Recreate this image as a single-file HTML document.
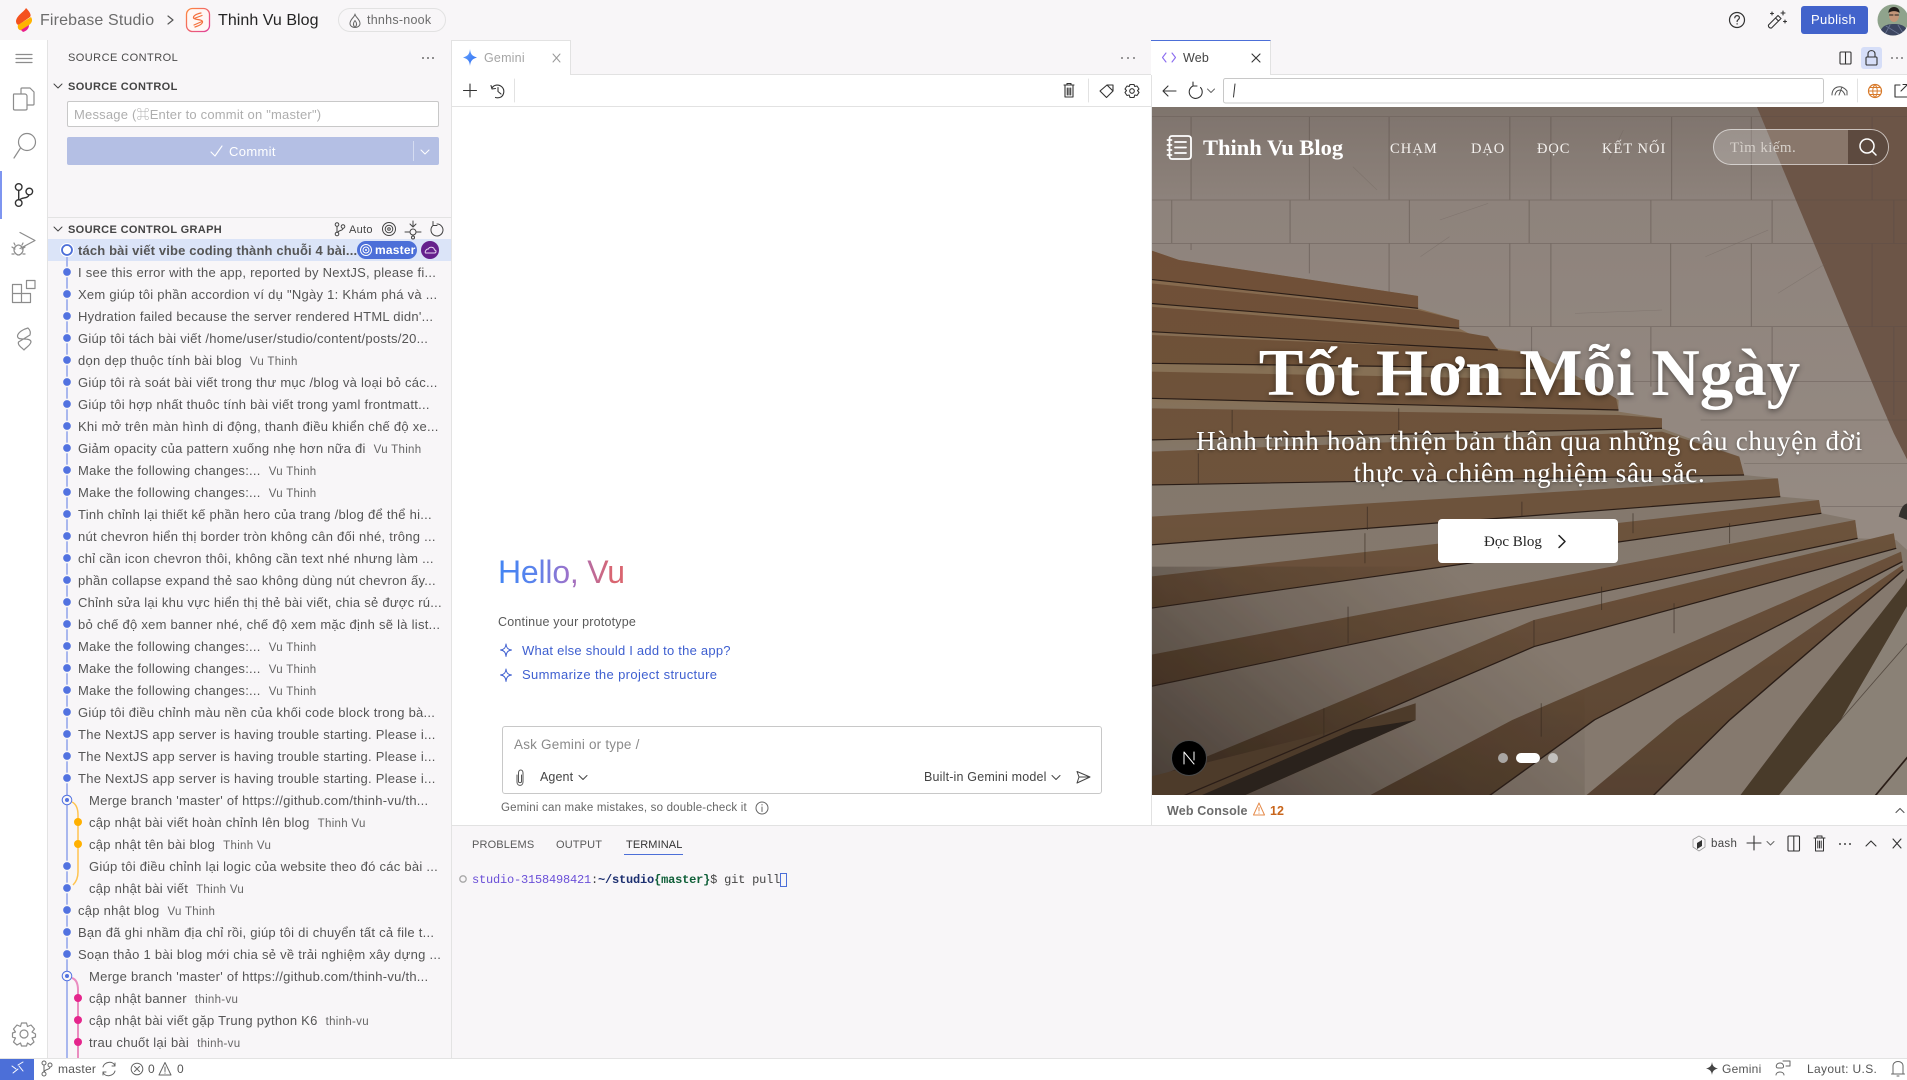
<!DOCTYPE html>
<html lang="vi"><head><meta charset="utf-8"><title>Firebase Studio</title>
<style>
html,body{margin:0;padding:0;width:1907px;height:1080px;overflow:hidden;background:#f8f6f8;font-family:"Liberation Sans","Noto Sans CJK JP",sans-serif;color:#444}
.a{position:absolute;white-space:nowrap}
.box{position:absolute}
.s{font-family:"Liberation Serif","Noto Serif CJK SC",serif}
.r{position:absolute;left:0;margin-top:1px;height:22px;line-height:22px;font-size:13px;letter-spacing:.26px;color:#555;white-space:nowrap}
.r i{font-style:normal;font-size:11.5px;letter-spacing:.3px;color:#666;margin-left:8px}
svg{position:absolute;overflow:visible}
</style></head><body>

<!-- panels -->
<div class="box" style="left:0;top:40px;width:47px;height:1018px;background:#fff;border-right:1px solid #e3e3e3"></div>
<div class="box" style="left:451px;top:40px;width:1px;height:1018px;background:#e3e3e3"></div>
<div class="box" style="left:48px;top:217px;width:403px;height:1px;background:#e3e3e3"></div>
<div class="box" style="left:48px;top:239px;width:403px;height:22px;background:#dbe4f8"></div>
<div class="box" style="left:452px;top:74px;width:1455px;height:751px;background:#fff"></div>
<div class="box" style="left:452px;top:74px;width:1455px;height:1px;background:#e2e2e2"></div>
<div class="box" style="left:452px;top:106px;width:699px;height:1px;background:#e2e2e2"></div>
<div class="box" style="left:1151px;top:40px;width:1px;height:785px;background:#e2e2e2"></div>
<div class="box" style="left:452px;top:825px;width:1455px;height:1px;background:#e2e2e2"></div>
<div class="box" style="left:451px;top:40px;width:120px;height:35px;background:#fff;border:1px solid #e2e2e2;border-bottom:0;box-sizing:border-box"></div>
<div class="box" style="left:1151px;top:40px;width:120px;height:35px;background:#fff;border-right:1px solid #e2e2e2;border-top:1px solid #4c6fd8;box-sizing:border-box"></div>
<div class="box" style="left:0;top:1058px;width:1907px;height:22px;background:#fff;border-top:1px solid #e3e3e3;box-sizing:border-box"></div>
<div class="box" style="left:0;top:1059px;width:34px;height:21px;background:#4c6fd8"></div>

<!-- hero image -->
<svg style="left:1152px;top:107px;overflow:hidden" width="755" height="688" viewBox="0 0 755 688">
<defs>
<linearGradient id="wall" gradientUnits="userSpaceOnUse" x1="0" y1="-585" x2="0" y2="600"><stop offset="0" stop-color="#7e736c"/><stop offset=".25" stop-color="#8e837c"/><stop offset="1" stop-color="#958a82"/></linearGradient>
<linearGradient id="tread" gradientUnits="userSpaceOnUse" x1="0" y1="-150" x2="0" y2="900"><stop offset="0" stop-color="#86694c"/><stop offset=".4" stop-color="#867056"/><stop offset=".62" stop-color="#83786c"/><stop offset="1" stop-color="#85796e"/></linearGradient>
<linearGradient id="ris" gradientUnits="userSpaceOnUse" x1="0" y1="-150" x2="0" y2="1485"><stop offset="0" stop-color="#6f5037"/><stop offset=".5" stop-color="#6d533c"/><stop offset="1" stop-color="#574230"/></linearGradient>
<linearGradient id="shade" gradientUnits="userSpaceOnUse" x1="0" y1="1490" x2="700" y2="900"><stop offset="0" stop-color="#1d140e" stop-opacity=".6"/><stop offset=".6" stop-color="#1d140e" stop-opacity=".18"/><stop offset="1" stop-color="#1d140e" stop-opacity="0"/></linearGradient>
<filter id="b"><feGaussianBlur stdDeviation=".6"/></filter>
</defs>
<rect width="755" height="688" fill="#847a72"/>
<g transform="translate(-2,193) scale(.483,.3333)" filter="url(#b)">
<rect x="0" y="-585" width="1575" height="2075" fill="url(#wall)"/>
<polygon points="1255,-585 1575,-585 1575,500 1540,400 1510,300" fill="#6c5446"/>
<g stroke="#574c46" stroke-width="2.2" fill="none" opacity=".45">
<path d="M0,-550H1570M0,-300H1570M0,-170H1570M0,80H1570M0,-25H400"/>
<path d="M85,-550V-300M330,-550V-300M495,-550V-300M745,-550V-300M830,-550V-300M1080,-550V-300M1245,-550V-300M1495,-550V-300"/>
<path d="M45,-300V-170M290,-300V-170M537,-300V-170M785,-300V-170M1037,-300V-170M1288,-300V-170M1540,-300V-170"/>
<path d="M85,-170V-150M330,-170V-80M495,-170V20M745,-170V80M830,-170V80M1078,-170V80M1245,-170V80M1495,-170V80"/>
<path d="M790,80V155M1037,80V260M1288,80V330M1540,80V345M1000,245H1570M1140,360H1570M1230,490H1570M1390,620H1568"/>
</g>
<g stroke="#6f645e" stroke-width="1.5" fill="none" opacity=".45"><path d="M620,-190L560,-130M980,-510L950,-420M1150,-130L1280,-210M1300,-20L1400,-110M600,-240L700,-290M420,-400L470,-330M880,40L1060,30"/></g>
<polygon points="0,-150 60,-120 555,-12 555,25 640,60 640,85 720,145 800,160 970,300 970,335 1060,355 1060,385 1220,470 1230,525 1300,535 1305,590 1385,600 1390,640 1460,660 1465,715 1545,720 1575,760 1575,1490 0,1490" fill="url(#tread)"/>
<g fill="url(#ris)">
<polygon points="0,-150 60,-120 555,-12 555,25 0,-62"/>
<polygon points="0,-50 555,30 640,60 640,85 0,10"/>
<polygon points="0,20 640,95 700,110 720,150 0,95"/>
<polygon points="0,105 720,150 800,160 810,205 0,190"/>
<polygon points="0,215 900,240 965,295 970,330 0,295"/>
<polygon points="0,325 970,345 1060,355 1060,385 0,420"/>
<polygon points="0,455 1060,395 1220,470 1230,525 0,555"/>
<polygon points="0,650 1300,535 1305,590 0,735"/>
<polygon points="0,830 1385,600 1390,640 0,925"/>
<polygon points="0,1065 1460,660 1465,715 0,1160"/>
<polygon points="0,1440 360,1225 795,960 1540,700 1545,745 795,1040 360,1310 0,1530"/>
<polygon points="450,1490 750,1260 1555,755 1558,785 920,1260 700,1490"/>
<polygon points="900,1490 1090,1260 1558,795 1560,810 1200,1260 1040,1490"/>
</g>
<polygon points="1220,1490 1340,1260 1562,850 1575,810 1575,900 1430,1260 1300,1490" fill="#4a3a2c"/>
<polygon points="1300,1490 1430,1260 1575,900 1575,1490" fill="#8a8176"/>
<rect x="0" y="800" width="900" height="690" fill="url(#shade)"/>
<polygon points="0,1430 360,1300 550,1210 550,1260 190,1490 0,1490" fill="#4d3a2c"/>
<polygon points="100,1490 420,1290 550,1260 190,1490" fill="#2b211a"/>
<g stroke="#2a1f18" stroke-width="3.5" fill="none">
<path d="M0,-62L555,25M0,10L640,85M0,95L720,150M0,190L810,205M0,295L970,330M0,420L1060,385M0,555L1230,525M0,735L1305,590M0,925L1390,640M0,1160L1465,715M0,1530L360,1310 795,1040 1545,745M700,1490L920,1260 1558,785M1040,1490L1200,1260 1560,810"/>
</g>
<g stroke="#332820" stroke-width="2" fill="none" opacity=".6"><path d="M170,330V400M515,325V395M100,460V550M450,620V690M770,605V650M445,700V790M410,920V1030M795,960V1040M360,1225V1310M810,1210V1310M935,860V930M1085,910V1000M1000,640V700M1200,670V730M1400,1310L1568,1030"/></g>
<path d="M1500,1490L1575,1360" stroke="#2a1f18" stroke-width="4"/>
<path d="M1568,610c-8,3-14,15-18,40l18,10z" fill="#35312e"/>
</g>
</svg>

<!-- top bar text -->
<div class="a" style="left:40px;top:11px;font-size:16px;line-height:20px;letter-spacing:.15px;color:#6c6c6c">Firebase Studio</div>
<div class="a" style="left:218px;top:11px;font-size:16px;line-height:20px;letter-spacing:.05px;color:#242424">Thinh Vu Blog</div>
<div class="box" style="left:338px;top:8px;width:108px;height:24px;border:1px solid #e2e2e2;border-radius:12px;box-sizing:border-box"></div>
<div class="a" style="left:367px;top:12px;font-size:12.5px;line-height:16px;letter-spacing:.25px;color:#6c6c6c">thnhs-nook</div>
<div class="box" style="left:1801px;top:6px;width:67px;height:28px;background:#4263cb;border-radius:3px"></div>
<div class="a" style="left:1811px;top:12px;font-size:13px;line-height:16px;letter-spacing:.35px;color:#fff">Publish</div>

<!-- sidebar text -->
<div class="a" style="left:68px;top:50px;font-size:11px;line-height:16px;letter-spacing:.45px;color:#4a4a4a">SOURCE CONTROL</div>
<div class="a" style="left:68px;top:79px;font-size:11px;line-height:16px;font-weight:bold;letter-spacing:.37px;color:#444">SOURCE CONTROL</div>
<div class="box" style="left:67px;top:101px;width:372px;height:26px;background:#fff;border:1px solid #c8c8c8;border-radius:2px;box-sizing:border-box"></div>
<div class="a" style="left:74px;top:107px;font-size:13px;line-height:16px;letter-spacing:.2px;color:#aeaeae">Message (⌘Enter to commit on "master")</div>
<div class="box" style="left:67px;top:137px;width:372px;height:28px;background:#b4bfe4;border-radius:2px"></div>
<div class="box" style="left:413px;top:141px;width:1px;height:20px;background:#d5dcf1"></div>
<div class="a" style="left:229px;top:144px;font-size:13px;line-height:16px;letter-spacing:.35px;color:#fff">Commit</div>
<div class="a" style="left:68px;top:222px;font-size:11px;line-height:16px;font-weight:bold;letter-spacing:.35px;color:#444">SOURCE CONTROL GRAPH</div>
<div class="a" style="left:349px;top:222px;font-size:11px;line-height:16px;letter-spacing:.3px;color:#444">Auto</div>

<!-- graph -->
<div class="box" style="left:48px;top:239px;width:403px;height:819px;overflow:hidden">
<svg style="left:0;top:0" width="403" height="819" viewBox="48 239 403 819">
<line x1="67" y1="250" x2="67" y2="1058" stroke="#a9b7ee" stroke-width="2"/>
<path d="M72,802Q78,805 78,815V872Q78,880 73,885" fill="none" stroke="#ffc451" stroke-width="1.5"/>
<path d="M72,978Q78,980 78,990V1058" fill="none" stroke="#ea8cc0" stroke-width="2"/>
<g fill="#5272e0" stroke="#f8f6f8" stroke-width="1.5">
<circle cx="67" cy="272" r="4.6"/><circle cx="67" cy="294" r="4.6"/><circle cx="67" cy="316" r="4.6"/><circle cx="67" cy="338" r="4.6"/><circle cx="67" cy="360" r="4.6"/><circle cx="67" cy="382" r="4.6"/><circle cx="67" cy="404" r="4.6"/><circle cx="67" cy="426" r="4.6"/><circle cx="67" cy="448" r="4.6"/><circle cx="67" cy="470" r="4.6"/><circle cx="67" cy="492" r="4.6"/><circle cx="67" cy="514" r="4.6"/><circle cx="67" cy="536" r="4.6"/><circle cx="67" cy="558" r="4.6"/><circle cx="67" cy="580" r="4.6"/><circle cx="67" cy="602" r="4.6"/><circle cx="67" cy="624" r="4.6"/><circle cx="67" cy="646" r="4.6"/><circle cx="67" cy="668" r="4.6"/><circle cx="67" cy="690" r="4.6"/><circle cx="67" cy="712" r="4.6"/><circle cx="67" cy="734" r="4.6"/><circle cx="67" cy="756" r="4.6"/><circle cx="67" cy="778" r="4.6"/>
<circle cx="67" cy="866" r="4.6"/><circle cx="67" cy="888" r="4.6"/><circle cx="67" cy="910" r="4.6"/><circle cx="67" cy="932" r="4.6"/><circle cx="67" cy="954" r="4.6"/>
</g>
<circle cx="67" cy="250" r="6" fill="#fff" stroke="#fff" stroke-width="2"/><circle cx="67" cy="250" r="5" fill="#fff" stroke="#4c6fd8" stroke-width="1.8"/>
<g fill="#f8f6f8" stroke="#5272e0" stroke-width="1"><circle cx="67" cy="800" r="4.8"/><circle cx="67" cy="976" r="4.8"/></g>
<circle cx="67" cy="800" r="2" fill="#5272e0"/><circle cx="67" cy="976" r="2" fill="#5272e0"/>
<g fill="#ffb000"><circle cx="78" cy="822" r="4"/><circle cx="78" cy="844" r="4"/></g>
<g fill="#e5258c"><circle cx="78" cy="998" r="4"/><circle cx="78" cy="1020" r="4"/><circle cx="78" cy="1042" r="4"/></g>
</svg>
<div class="r" style="left:30px;top:0;font-weight:bold;letter-spacing:.15px">tách bài viết vibe coding thành chuỗi 4 bài...</div>
<div class="r" style="left:30px;top:22px">I see this error with the app, reported by NextJS, please fi...</div>
<div class="r" style="left:30px;top:44px">Xem giúp tôi phần accordion ví dụ "Ngày 1: Khám phá và ...</div>
<div class="r" style="left:30px;top:66px">Hydration failed because the server rendered HTML didn'...</div>
<div class="r" style="left:30px;top:88px">Giúp tôi tách bài viết /home/user/studio/content/posts/20...</div>
<div class="r" style="left:30px;top:110px">dọn dẹp thuộc tính bài blog<i>Vu Thinh</i></div>
<div class="r" style="left:30px;top:132px">Giúp tôi rà soát bài viết trong thư mục /blog và loại bỏ các...</div>
<div class="r" style="left:30px;top:154px">Giúp tôi hợp nhất thuôc tính bài viết trong yaml frontmatt...</div>
<div class="r" style="left:30px;top:176px">Khi mở trên màn hình di động, thanh điều khiển chế độ xe...</div>
<div class="r" style="left:30px;top:198px">Giảm opacity của pattern xuống nhẹ hơn nữa đi<i>Vu Thinh</i></div>
<div class="r" style="left:30px;top:220px">Make the following changes:...<i>Vu Thinh</i></div>
<div class="r" style="left:30px;top:242px">Make the following changes:...<i>Vu Thinh</i></div>
<div class="r" style="left:30px;top:264px">Tinh chỉnh lại thiết kế phần hero của trang /blog để thể hi...</div>
<div class="r" style="left:30px;top:286px">nút chevron hiển thị border tròn không cân đối nhé, trông ...</div>
<div class="r" style="left:30px;top:308px">chỉ cần icon chevron thôi, không cần text nhé nhưng làm ...</div>
<div class="r" style="left:30px;top:330px">phần collapse expand thẻ sao không dùng nút chevron ấy...</div>
<div class="r" style="left:30px;top:352px">Chỉnh sửa lại khu vực hiển thị thẻ bài viết, chia sẻ được rú...</div>
<div class="r" style="left:30px;top:374px">bỏ chế độ xem banner nhé, chế độ xem mặc định sẽ là list...</div>
<div class="r" style="left:30px;top:396px">Make the following changes:...<i>Vu Thinh</i></div>
<div class="r" style="left:30px;top:418px">Make the following changes:...<i>Vu Thinh</i></div>
<div class="r" style="left:30px;top:440px">Make the following changes:...<i>Vu Thinh</i></div>
<div class="r" style="left:30px;top:462px">Giúp tôi điều chỉnh màu nền của khối code block trong bà...</div>
<div class="r" style="left:30px;top:484px">The NextJS app server is having trouble starting. Please i...</div>
<div class="r" style="left:30px;top:506px">The NextJS app server is having trouble starting. Please i...</div>
<div class="r" style="left:30px;top:528px">The NextJS app server is having trouble starting. Please i...</div>
<div class="r" style="left:41px;top:550px">Merge branch 'master' of https://github.com/thinh-vu/th...</div>
<div class="r" style="left:41px;top:572px">cập nhật bài viết hoàn chỉnh lên blog<i>Thinh Vu</i></div>
<div class="r" style="left:41px;top:594px">cập nhật tên bài blog<i>Thinh Vu</i></div>
<div class="r" style="left:41px;top:616px">Giúp tôi điều chỉnh lại logic của website theo đó các bài ...</div>
<div class="r" style="left:41px;top:638px">cập nhật bài viết<i>Thinh Vu</i></div>
<div class="r" style="left:30px;top:660px">cập nhật blog<i>Vu Thinh</i></div>
<div class="r" style="left:30px;top:682px">Bạn đã ghi nhầm địa chỉ rồi, giúp tôi di chuyển tất cả file t...</div>
<div class="r" style="left:30px;top:704px">Soạn thảo 1 bài blog mới chia sẻ về trải nghiệm xây dựng ...</div>
<div class="r" style="left:41px;top:726px">Merge branch 'master' of https://github.com/thinh-vu/th...</div>
<div class="r" style="left:41px;top:748px">cập nhật banner<i>thinh-vu</i></div>
<div class="r" style="left:41px;top:770px">cập nhật bài viết gặp Trung python K6<i>thinh-vu</i></div>
<div class="r" style="left:41px;top:792px">trau chuốt lại bài<i>thinh-vu</i></div>
</div>
<div class="box" style="left:357px;top:241px;width:60px;height:18px;background:#4c6fd8;border-radius:9px"></div>
<div class="a" style="left:375px;top:242px;font-size:12px;line-height:16px;font-weight:bold;letter-spacing:.2px;color:#fff">master</div>
<div class="box" style="left:421px;top:241px;width:18px;height:18px;background:#65208c;border-radius:50%"></div>

<!-- gemini tab -->
<div class="a" style="left:484px;top:50px;font-size:12.5px;line-height:16px;letter-spacing:.2px;color:#a5a5a5">Gemini</div>
<div class="a" style="left:1183px;top:50px;font-size:12.5px;line-height:16px;letter-spacing:.2px;color:#444">Web</div>

<!-- gemini chat -->
<div class="a" style="left:498px;top:552px;font-size:32px;line-height:40px;letter-spacing:-.2px;background:linear-gradient(90deg,#4285f4 0%,#5b83ec 30%,#9b72cb 55%,#d96570 90%);-webkit-background-clip:text;background-clip:text;color:transparent">Hello, Vu</div>
<div class="a" style="left:498px;top:614px;font-size:12.5px;line-height:16px;letter-spacing:.2px;color:#5a5a5a">Continue your prototype</div>
<div class="a" style="left:522px;top:643px;font-size:13px;line-height:16px;letter-spacing:.23px;color:#3e5fd0">What else should I add to the app?</div>
<div class="a" style="left:522px;top:667px;font-size:13px;line-height:16px;letter-spacing:.36px;color:#3e5fd0">Summarize the project structure</div>
<div class="box" style="left:502px;top:726px;width:600px;height:68px;border:1px solid #c8c8c8;border-radius:3px;box-sizing:border-box"></div>
<div class="a" style="left:514px;top:736px;font-size:13.5px;line-height:17px;letter-spacing:.2px;color:#8a8a8a">Ask Gemini or type /</div>
<div class="a" style="left:540px;top:769px;font-size:12.5px;line-height:16px;letter-spacing:.1px;color:#444">Agent</div>
<div class="a" style="left:924px;top:769px;font-size:12.5px;line-height:16px;letter-spacing:.18px;color:#444">Built-in Gemini model</div>
<div class="a" style="left:501px;top:800px;font-size:11.5px;line-height:16px;letter-spacing:.2px;color:#666">Gemini can make mistakes, so double-check it</div>

<!-- hero text -->
<div class="a s" style="left:1152px;width:755px;text-align:center;top:335px;font-size:67px;line-height:76px;font-weight:bold;color:#fff;text-shadow:0 2px 6px rgba(0,0,0,.45)">Tốt Hơn Mỗi Ngày</div>
<div class="a s" style="left:1152px;width:755px;text-align:center;top:425px;font-size:27px;line-height:32px;letter-spacing:.72px;color:#fff;text-shadow:0 1px 3px rgba(0,0,0,.4)">Hành trình hoàn thiện bản thân qua những câu chuyện đời<br>thực và chiêm nghiệm sâu sắc.</div>
<div class="box" style="left:1438px;top:519px;width:180px;height:44px;background:#fff;border-radius:4px"></div>
<div class="a s" style="left:1484px;top:533px;font-size:15px;line-height:18px;color:#222">Đọc Blog</div>
<div class="a s" style="left:1203px;top:134px;font-size:22.5px;line-height:28px;font-weight:bold;color:#fff">Thinh Vu Blog</div>
<div class="a s" style="left:1390px;top:140px;font-size:14.5px;line-height:18px;letter-spacing:1.1px;color:#f4f1ee">CHẠM</div>
<div class="a s" style="left:1471px;top:140px;font-size:14.5px;line-height:18px;letter-spacing:.9px;color:#f4f1ee">DẠO</div>
<div class="a s" style="left:1537px;top:140px;font-size:14.5px;line-height:18px;letter-spacing:.9px;color:#f4f1ee">ĐỌC</div>
<div class="a s" style="left:1602px;top:140px;font-size:14.5px;line-height:18px;letter-spacing:1px;color:#f4f1ee">KẾT NỐI</div>
<div class="box" style="left:1713px;top:129px;width:176px;height:36px;border:1px solid rgba(255,255,255,.55);border-radius:18px;box-sizing:border-box;overflow:hidden;background:rgba(255,255,255,.2)"><div class="box" style="left:134px;top:0;width:42px;height:36px;background:#5d4a3f"></div></div>
<div class="a s" style="left:1730px;top:139px;font-size:15px;line-height:18px;letter-spacing:.4px;color:#d6d0ca">Tìm kiếm.</div>
<div class="box" style="left:1498px;top:753px;width:10px;height:10px;border-radius:50%;background:#a9a6a3"></div>
<div class="box" style="left:1516px;top:753px;width:24px;height:10px;border-radius:5px;background:#fff"></div>
<div class="box" style="left:1548px;top:753px;width:10px;height:10px;border-radius:50%;background:#c2c0bd"></div>
<div class="box" style="left:1171px;top:740px;width:36px;height:36px;border-radius:50%;background:#000;border:1px solid #4a4a4a;box-sizing:border-box"></div>

<!-- web console -->
<div class="a" style="left:1167px;top:803px;font-size:12.5px;line-height:16px;font-weight:bold;letter-spacing:.15px;color:#6b6b6b">Web Console</div>
<div class="a" style="left:1270px;top:803px;font-size:12.5px;line-height:16px;font-weight:bold;color:#c8651b">12</div>

<!-- terminal -->
<div class="a" style="left:472px;top:837px;font-size:11px;line-height:16px;letter-spacing:.15px;color:#5a5a5a">PROBLEMS</div>
<div class="a" style="left:556px;top:837px;font-size:11px;line-height:16px;letter-spacing:.15px;color:#5a5a5a">OUTPUT</div>
<div class="a" style="left:626px;top:837px;font-size:11px;line-height:16px;letter-spacing:.1px;color:#333">TERMINAL</div>
<div class="box" style="left:624px;top:854px;width:59px;height:1px;background:#4c6fd8"></div>
<div class="a" style="left:472px;top:872px;font-family:'Liberation Mono',monospace;font-size:12px;line-height:16px;letter-spacing:-.2px;color:#444"><span style="color:#6a4fd8">studio-3158498421</span>:<b style="color:#1c2f70">~/studio</b><b style="color:#0f5f38">{master}</b>$ git pull</div>
<div class="box" style="left:780px;top:873px;width:7px;height:14px;border:1px solid #4c6fd8;box-sizing:border-box"></div>
<div class="a" style="left:1711px;top:836px;font-size:11.5px;line-height:16px;letter-spacing:.3px;color:#444">bash</div>

<!-- status bar -->
<div class="a" style="left:58px;top:1061px;font-size:12px;line-height:16px;letter-spacing:.25px;color:#555">master</div>
<div class="a" style="left:148px;top:1061px;font-size:12px;line-height:16px;color:#555">0</div>
<div class="a" style="left:177px;top:1061px;font-size:12px;line-height:16px;color:#555">0</div>
<div class="a" style="left:1722px;top:1061px;font-size:12px;line-height:16px;letter-spacing:.25px;color:#555">Gemini</div>
<div class="a" style="left:1807px;top:1061px;font-size:12px;line-height:16px;letter-spacing:.35px;color:#555">Layout: U.S.</div>

<!-- icons -->
<svg style="left:0;top:0" width="1907" height="1080" viewBox="0 0 1907 1080" fill="none" stroke-linecap="round" stroke-linejoin="round">
<defs><linearGradient id="ag" x1="0" y1="0" x2="1" y2="1"><stop offset="0" stop-color="#ff8a3c"/><stop offset="1" stop-color="#e0409a"/></linearGradient>
<linearGradient id="gs" x1="0" y1="0" x2="1" y2="1"><stop offset="0" stop-color="#6aa8ff"/><stop offset="1" stop-color="#2b6af0"/></linearGradient>
<clipPath id="av"><circle cx="1893" cy="20" r="15.5"/></clipPath></defs>
<!-- firebase -->
<path d="M26,8C24,12 17,15 16,21C16,24 18,26 20,24L30,17C32,15 29,11 26,8Z" fill="#f4511e"/>
<path d="M18,25L31,17C33,20 32,23 29,25L22,30C19,31 17,28 18,25Z" fill="#ffb300"/>
<path d="M21,30L29,25C29,28 27,31 23,32Z" fill="#e91e8c"/>
<path d="M168,16L173,20L168,24" stroke="#555" stroke-width="1.2"/>
<rect x="186.5" y="8.5" width="23" height="23" rx="6" stroke="url(#ag)" stroke-width="1.3" fill="#fff8f5"/>
<path d="M201,13C196,14 193,16 193.500,18C194,20 202,19 202.500,21.500C203,24 198,26 195,27M194,18.500L202,15.500M194,25L202,21.500" stroke="#f4703c" stroke-width="1.2"/>
<!-- env pill flame -->
<path d="M355,14C355,17 350,19 350,23.500C350,26 352.500,27.500 355,27.500C357.500,27.500 360,26 360,23.500C360,19 355,17 355,14ZM355,27.500C353,25.500 353,23 355,20.500C357,23 357,25.500 355,27.500Z" stroke="#666" stroke-width="1"/>
<!-- top right -->
<circle cx="1737" cy="20" r="7.500" stroke="#333" stroke-width="1.2"/>
<path d="M1734.800,17.800C1735,14.800 1739.500,15 1739.400,17.800C1739.300,19.500 1737.100,19.700 1737.100,21.500M1737.100,23.700V24" stroke="#333" stroke-width="1.2"/>
<path d="M1778,15.500L1781,18.500L1771.500,28C1770,28.500 1768,27 1768.500,25ZM1775.500,18L1778.500,21M1783,11V15M1781,13H1785M1772,12V15M1770.500,13.500H1773.500M1785,20V23M1783.500,21.500H1786.500" stroke="#333" stroke-width="1.1"/>
<g clip-path="url(#av)"><rect x="1877" y="4" width="32" height="32" fill="#8fa38c"/><path d="M1879,37C1880,26 1886,24 1894,24C1902,24 1908,26 1909,37Z" fill="#3c4560"/><path d="M1886,26L1902,36M1890,25L1884,36M1898,25L1905,36" stroke="#6d7896" stroke-width=".8"/><ellipse cx="1894" cy="15.500" rx="5" ry="6.500" fill="#c39678"/><path d="M1888.500,13C1888,5 1900,5 1899.500,13C1897,10.500 1891,10.500 1888.500,13Z" fill="#1f1b19"/><path d="M1889.500,15H1893M1895,15H1898.500" stroke="#222" stroke-width="1"/></g>
<!-- activity -->
<g stroke="#8c8c8c" stroke-width="1.2">
<path d="M16,54.500H32M16,58.500H32M16,62.500H32"/>
<path d="M21,94V89C21,88 22,88 22,88H30L34,92V104C34,105 33,105 33,105H27M14,94H25C26,94 27,95 27,96V109C27,110 26,110 25,110H15C14,110 13.500,109.500 13.500,109V95C13.500,94 14,94 14,94Z"/>
<circle cx="27" cy="142" r="8.500"/><path d="M20.500,148L14,158"/>
<path d="M20,232.500L35,240.500L20,248.500M14,250C14,247 17,245 18.500,245C20,245 23,247 23,250C23,253 20,255 18.500,255C17,255 14,253 14,250ZM12,247L15,249M25,247L22,249M12,254H14M23,254H25M15,245L14,243M22,245L23,243"/>
<path d="M12.500,284.500H21.500V302.500H12.500ZM12.500,293.500H30.500V302.500H21.500M26.500,280.500H35V288.500H26.500Z"/>
<path d="M28,328C24,329 18,332 17.500,336C17.500,339 21,339 24,339C28,339 31,339.500 31,342C30,346 25,348 24,350C21,347 17.500,345 18.500,342L30,335C31,332 30,330 28,328Z"/>
</g>
<rect x="0" y="171" width="2" height="48" fill="#7e95f0"/>
<g stroke="#333" stroke-width="1.4"><circle cx="18.700" cy="187" r="3.300"/><circle cx="18.700" cy="203" r="3.300"/><circle cx="29.300" cy="191.500" r="3.300"/><path d="M18.700,190.300V199.700M29,195C28,199 21,197 20,200"/></g>
<g stroke="#8c8c8c" stroke-width="1.2"><circle cx="24" cy="1034" r="4"/><path d="M21.500,1023L26.500,1023L27.500,1026.500L31,1025L34.500,1029L32,1032L35.500,1034L35.500,1037L32,1038L34,1042L30.500,1045L27.500,1043L26.500,1046L21.500,1046L20.500,1043L17,1045L13.500,1042L15.500,1038L12.500,1037L12.500,1033L15.500,1032L13.500,1029L17,1025L20.500,1026.500Z"/></g>
<!-- sidebar icons -->
<g fill="#444"><circle cx="423" cy="58" r=".9"/><circle cx="428" cy="58" r=".9"/><circle cx="433" cy="58" r=".9"/></g>
<path d="M54,84L58,88L62,84M54,227L58,231L62,227" stroke="#444" stroke-width="1"/>
<path d="M211,152L215,156L222,146" stroke="#fff" stroke-width="1.1"/>
<path d="M421,150L425,154L429,150" stroke="#fff" stroke-width="1"/>
<g stroke="#444" stroke-width="1"><circle cx="337" cy="224.500" r="1.800"/><circle cx="337" cy="234" r="1.800"/><circle cx="343" cy="226.500" r="1.800"/><path d="M337,226.500V232M343,228.500C343,231 338,230 338,232.500"/>
<circle cx="389" cy="229" r="6.500"/><circle cx="389" cy="229" r="3.800"/><circle cx="389" cy="229" r="1.300"/>
<path d="M413,221V226M410,224L413,227L416,224M405,232H409.500M416.500,232H421"/><circle cx="413" cy="232" r="3"/><circle cx="413" cy="237.500" r="1.500"/>
<path d="M433,225.500A6,6 0 1 0 437,224M433,221.500V225.500H437"/></g>
<circle cx="366" cy="250" r="5.500" stroke="#fff" stroke-width="1"/><circle cx="366" cy="250" r="3" stroke="#fff" stroke-width="1"/><circle cx="366" cy="250" r="1" fill="#fff"/>
<path d="M425.500,253H434.500C436.500,253 436.500,250 434.500,250C434,246.500 429,246.500 428.500,249C426,248.500 424.500,252.500 425.500,253Z" stroke="#e5d5f0" stroke-width="1"/>
<!-- gemini tab -->
<path d="M470,49C470.500,54 472,56 477,57.500C472,59 470.500,61 470,66C469.500,61 468,59 463,57.500C468,56 469.500,54 470,49Z" fill="url(#gs)"/>
<path d="M553,54L560,62M560,54L553,62" stroke="#999" stroke-width="1"/>
<g fill="#555"><circle cx="1122" cy="58" r=".9"/><circle cx="1128" cy="58" r=".9"/><circle cx="1134" cy="58" r=".9"/></g>
<!-- gemini toolbar -->
<g stroke="#333" stroke-width="1.1">
<path d="M470,84V97M463.500,90.500H476.500"/>
<path d="M491,85.500L492,89L495.500,88.500M492,88C494,84.500 499,84 502,87C505,90 504,95 501,97C499,98 497,98 495.500,97.500M498,87.500V91.500L501,94"/>
<path d="M1064,85H1074M1067,85V83.500H1071V85M1065,85.500V97H1073V85.500M1067.300,88V95M1069,88V95M1070.700,88V95"/>
<path d="M1100,91L1107,85H1113V91L1106.500,97.500ZM1107,85C1110,88 1112,90 1113,91"/>
<circle cx="1132" cy="91" r="2.300"/><path d="M1130,84.500H1134L1134.800,86.500L1137,86L1139,89L1137.500,90.500L1139,92.500L1137,95.500L1134.800,95L1134,97.500H1130L1129.200,95L1127,95.500L1125,92.500L1126.500,90.500L1125,89L1127,86L1129.200,86.500Z"/>
</g>
<path d="M514.500,79V102M1088.500,79V102M1857.500,79V102" stroke="#e2e2e2"/>
<!-- web tab -->
<path d="M1166,53L1162.500,57.500L1166,62M1172,53L1175.500,57.500L1172,62" stroke="#8a6cf0" stroke-width="1.1"/>
<path d="M1252,54L1260,62M1260,54L1252,62" stroke="#333" stroke-width="1.1"/>
<rect x="1840" y="52" width="11" height="12" rx="1" stroke="#333" stroke-width="1.1"/><path d="M1845.500,52V64" stroke="#333" stroke-width="1.1"/>
<rect x="1861" y="47" width="21" height="22" rx="3" fill="#d6def8"/>
<rect x="1866" y="57" width="11" height="8" rx="1" stroke="#333" stroke-width="1.1"/><path d="M1868,57V54C1868,49.500 1875,49.500 1875,54V57" stroke="#333" stroke-width="1.1"/>
<g fill="#555"><circle cx="1892" cy="58" r=".9"/><circle cx="1897" cy="58" r=".9"/><circle cx="1902" cy="58" r=".9"/></g>
<!-- web toolbar -->
<path d="M1176,91H1163M1168,86L1163,91L1168,96" stroke="#333" stroke-width="1.1"/>
<path d="M1193,86A6.500,6.500 0 1 0 1200.500,87.500M1193,82V86H1197" stroke="#333" stroke-width="1.1"/>
<path d="M1207.500,89L1211,92.500L1214.500,89" stroke="#666" stroke-width="1"/>
<rect x="1223.500" y="78.500" width="600" height="24.500" rx="2" stroke="#c8c8c8" fill="#fff"/>
<path d="M1235,84L1233.500,97" stroke="#333"/>
<path d="M1832,95C1832,86 1842,84 1847,91L1847,95M1835,95C1836,90 1841,88 1844,93L1845,95M1839,95L1842,87" stroke="#555" stroke-width="1"/>
<circle cx="1875" cy="91" r="6.500" stroke="#d87a2a" stroke-width="1.2"/><path d="M1868.500,91H1881.500M1875,84.500C1872,88 1872,94 1875,97.500M1875,84.500C1878,88 1878,94 1875,97.500M1870,87.500H1880M1870,94.500H1880" stroke="#d87a2a" stroke-width="1"/>
<path d="M1900,85H1895V97H1907M1901,91L1907,85M1903,84.500H1907" stroke="#333" stroke-width="1.1"/>
<!-- chat icons -->
<g stroke="#3e5fd0" stroke-width="1"><path d="M506,644C506.500,648 508,649.500 511.500,650C508,650.500 506.500,652 506,656.500C505.500,652 504,650.500 500.500,650C504,649.500 505.500,648 506,644Z"/><path d="M506,669C506.500,673 508,674.500 511.500,675C508,675.500 506.500,677 506,681.500C505.500,677 504,675.500 500.500,675C504,674.500 505.500,673 506,669Z"/></g>
<path d="M517,775V782C517,786.500 523,786.500 523,782V773C523,769 518.500,769 518.500,773V781.500C518.500,783 521.500,783 521.500,781.500V775" stroke="#555" stroke-width="1"/>
<path d="M579,775.500L583,779.500L587,775.500M1052,775.500L1056,779.500L1060,775.500" stroke="#444" stroke-width="1"/>
<path d="M1077,771.500L1090,777L1077,783L1079,777ZM1079,777H1090" stroke="#444" stroke-width="1"/>
<circle cx="762" cy="808" r="6" stroke="#666" stroke-width="1"/><path d="M762,807V811.500M762,804.500V805" stroke="#666" stroke-width="1"/>
<!-- hero icons -->
<path d="M1172,136H1188C1190,136 1191,137 1191,139V156C1191,158 1190,159 1188,159H1172C1170,159 1169.500,158 1169.500,156V139C1169.500,137 1170,136 1172,136ZM1167.500,140H1171.500M1167.500,145H1171.500M1167.500,150H1171.500M1167.500,155H1171.500M1175,142H1186M1175,147.500H1186M1175,153H1186" stroke="#fff" stroke-width="1.800"/>
<circle cx="1867" cy="146" r="7" stroke="#fff" stroke-width="1.500"/><path d="M1872,151L1876,155" stroke="#fff" stroke-width="1.500"/>
<path d="M1559,535.500L1565,541.500L1559,547.500" stroke="#222" stroke-width="1.500"/>
<path d="M1184,764V752L1194,764M1194,752V760" stroke="#fff" stroke-width="1"/>
<!-- console -->
<path d="M1259,803L1253.500,815H1264.500ZM1259,807.500V811M1259,813V813.200" stroke="#e58b4b" stroke-width="1"/>
<path d="M1896,812.500L1900,808.500L1904,812.500" stroke="#555" stroke-width="1.100"/>
<!-- terminal icons -->
<circle cx="463" cy="879" r="3.200" stroke="#a8a8a8" stroke-width="1.300"/>
<path d="M1699,836L1705,839.500V847L1699,851L1693,847V839.500Z" stroke="#999" stroke-width=".8"/><path d="M1697,843L1702,840V846L1697,849Z" fill="#333"/>
<path d="M1754,836V850M1747,843H1761" stroke="#333" stroke-width="1.100"/>
<path d="M1767,841.500L1770.500,845L1774,841.500" stroke="#666" stroke-width="1"/>
<rect x="1788" y="836" width="11.500" height="15" rx="1" stroke="#333" stroke-width="1.100"/><path d="M1793.800,836V851" stroke="#333" stroke-width="1.100"/>
<path d="M1814,838H1825M1817,838V836H1822V838M1815.500,838V851H1823.500V838M1817.800,841V848M1819.500,841V848M1821.200,841V848" stroke="#333" stroke-width="1"/>
<g fill="#444"><circle cx="1840" cy="844" r="1"/><circle cx="1845" cy="844" r="1"/><circle cx="1850" cy="844" r="1"/></g>
<path d="M1866,846L1871,841L1876,846M1893,839L1901,848M1901,839L1893,848" stroke="#333" stroke-width="1.100"/>
<!-- status icons -->
<path d="M13,1073L18,1069M18,1065L23,1062M19,1066L23,1071M12,1066L16,1069" stroke="#fff" stroke-width="1"/>
<g stroke="#666" stroke-width="1"><circle cx="44" cy="1063" r="2"/><circle cx="44" cy="1074" r="2"/><circle cx="50" cy="1065" r="2"/><path d="M44,1065V1072M50,1067C50,1070 45,1069 44.500,1071.500"/>
<path d="M103,1067C104,1062 113,1060 115,1066M115,1063V1066H112M115,1071C114,1076 105,1078 103,1072M103,1075V1072H106"/>
<circle cx="137" cy="1069" r="5.800"/><path d="M134.500,1066.500L139.500,1071.500M139.500,1066.500L134.500,1071.500"/>
<path d="M165,1062.500L159,1075H171ZM165,1067V1071.500M165,1073V1073.200"/>
<path d="M1778,1068C1775,1068 1776,1063 1780,1063C1784,1063 1784.500,1068 1782,1068ZM1776,1075C1776,1071 1784,1071 1784,1075M1783,1061H1790V1066H1786"/>
<path d="M1893,1074V1066C1893,1060 1903,1060 1903,1066V1074ZM1891.500,1074H1904.500M1897,1076H1899"/></g>
<path d="M1712,1062C1712.500,1066 1714,1067.500 1718,1068.500C1714,1069.500 1712.500,1071 1712,1075C1711.500,1071 1710,1069.500 1706,1068.500C1710,1067.500 1711.500,1066 1712,1062Z" fill="#444"/>
</svg>
</body></html>
